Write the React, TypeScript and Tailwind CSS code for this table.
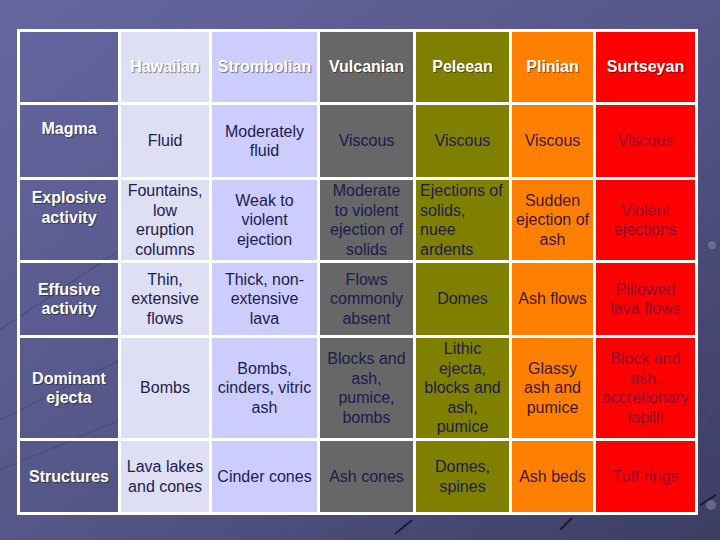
import React from "react";

type Col = { bg: string; text: string };

const cols: Col[] = [
  { bg: "bg-transparent", text: "text-white" },
  { bg: "bg-[#dfdff4]", text: "text-[#1c1c4e]" },
  { bg: "bg-[#ccccff]", text: "text-[#1c1c4e]" },
  { bg: "bg-[#676767]", text: "text-[#1c1c4e]" },
  { bg: "bg-[#808000]", text: "text-[#1c1c4e]" },
  { bg: "bg-[#ff8000]", text: "text-[#3e1832]" },
  { bg: "bg-[#ff0000]", text: "text-[#8e0030]" },
];

const headers = ["", "Hawaiian", "Strombolian", "Vulcanian", "Peleean", "Plinian", "Surtseyan"];

// each row: label lines, label padding class, then cell lines
const rows: { label: string[]; labelPad: string; cells: string[][] }[] = [
  {
    label: ["Magma"],
    labelPad: "items-start pt-[14px]",
    cells: [["Fluid"], ["Moderately", "fluid"], ["Viscous"], ["Viscous"], ["Viscous"], ["Viscous"]],
  },
  {
    label: ["Explosive", "activity"],
    labelPad: "items-start pt-[8px]",
    cells: [
      ["Fountains,", "low", "eruption", "columns"],
      ["Weak to", "violent", "ejection"],
      ["Moderate", "to violent", "ejection of", "solids"],
      ["Ejections of", "solids,", "nuee", "ardents"],
      ["Sudden", "ejection of", "ash"],
      ["Violent", "ejections"],
    ],
  },
  {
    label: ["Effusive", "activity"],
    labelPad: "items-center",
    cells: [
      ["Thin,", "extensive", "flows"],
      ["Thick, non-", "extensive", "lava"],
      ["Flows", "commonly", "absent"],
      ["Domes"],
      ["Ash flows"],
      ["Pillowed", "lava flows"],
    ],
  },
  {
    label: ["Dominant", "ejecta"],
    labelPad: "items-center",
    cells: [
      ["Bombs"],
      ["Bombs,", "cinders, vitric", "ash"],
      ["Blocks and", "ash,", "pumice,", "bombs"],
      ["Lithic", "ejecta,", "blocks and", "ash,", "pumice"],
      ["Glassy", "ash and", "pumice"],
      ["Block and", "ash,", "accretionary", "lapilli"],
    ],
  },
  {
    label: ["Structures"],
    labelPad: "items-center",
    cells: [
      ["Lava lakes", "and cones"],
      ["Cinder cones"],
      ["Ash cones"],
      ["Domes,", "spines"],
      ["Ash beds"],
      ["Tuff rings"],
    ],
  },
];

function Lines({ lines }: { lines: string[] }) {
  return (
    <span>
      {lines.map((l, i) => (
        <React.Fragment key={i}>
          {i > 0 && <br />}
          {l}
        </React.Fragment>
      ))}
    </span>
  );
}

export default function App() {
  const shadow = "[text-shadow:1px_1px_1px_rgba(0,0,0,0.45)]";
  return (
    <div
      className="relative w-[720px] h-[540px] overflow-hidden bg-gradient-to-br from-[#6466a0] via-[#555788] to-[#3b3d63]"
      style={{ fontFamily: '"Liberation Sans", Arial, sans-serif' }}
    >
      {/* faint network lines of the slide design */}
      <svg className="absolute inset-0" width="720" height="540">
        <g stroke="#4a4c7a" strokeWidth="1.5" opacity="0.7" fill="none">
          <path d="M0 330 L120 250" />
          <path d="M0 420 L120 360" />
          <path d="M0 470 L120 420" />
          <path d="M697 190 L720 200" />
          <path d="M697 260 L720 240" />
          <path d="M697 330 L720 350" />
          <path d="M697 430 L720 400" />
        </g>
        <g stroke="#1a1a2e" strokeWidth="2" fill="none">
          <path d="M395 534 L412 520" />
          <path d="M560 530 L572 518" />
          <path d="M700 505 L716 495" />
        </g>
        <g fill="#8a8cb4" opacity="0.5">
          <circle cx="711" cy="505" r="5" />
          <circle cx="712" cy="245" r="4" />
        </g>
      </svg>

      <div className="absolute left-[17px] top-[29px] border-l-[3px] border-t-[3px] border-white">
        <div className="grid grid-cols-[101px_91px_108px_96px_96px_84px_102px] grid-rows-[73px_75px_83px_75px_103px_74px] text-[16px] leading-[19.5px]">
          {headers.map((h, i) => (
            <div
              key={`h${i}`}
              className={`flex items-center justify-center border-r-[3px] border-b-[3px] border-white font-bold text-white ${shadow} ${cols[i].bg}`}
            >
              {h}
            </div>
          ))}
          {rows.map((r, ri) => (
            <React.Fragment key={ri}>
              <div
                className={`flex justify-center text-center border-r-[3px] border-b-[3px] border-white font-bold text-white ${shadow} ${r.labelPad}`}
              >
                <Lines lines={r.label} />
              </div>
              {r.cells.map((c, ci) => {
                const leftAligned = ri === 1 && ci === 3;
                return (
                  <div
                    key={ci}
                    className={`flex items-center border-r-[3px] border-b-[3px] border-white ${cols[ci + 1].bg} ${cols[ci + 1].text} ${
                      leftAligned ? "justify-start text-left pl-[4px]" : "justify-center text-center"
                    }`}
                  >
                    <Lines lines={c} />
                  </div>
                );
              })}
            </React.Fragment>
          ))}
        </div>
      </div>
    </div>
  );
}
